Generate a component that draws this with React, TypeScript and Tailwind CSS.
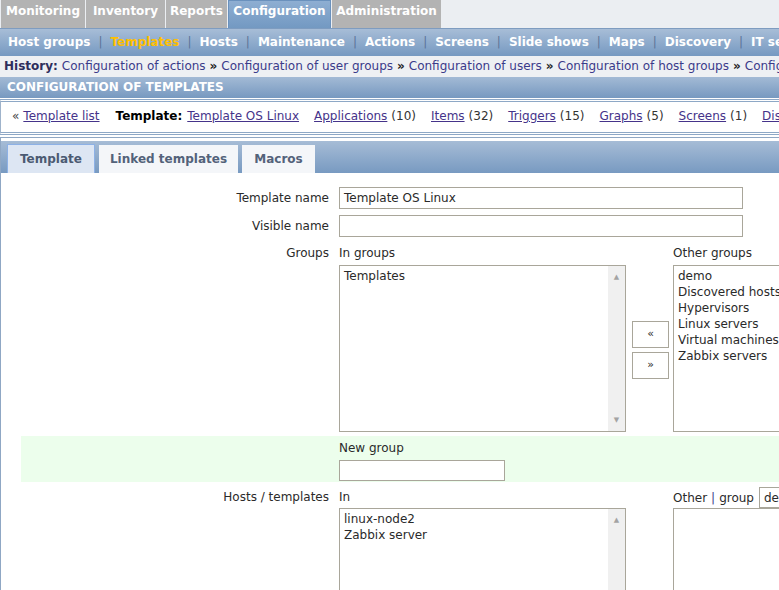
import React from "react";

const topTabs = [
  { label: "Monitoring", w: "w-[84px]" },
  { label: "Inventory", w: "w-[79px]" },
  { label: "Reports", w: "w-[61px]" },
  { label: "Configuration", w: "w-[103px]", active: true },
  { label: "Administration", w: "w-[109px]" },
];

const subNav = [
  "Host groups",
  "Templates",
  "Hosts",
  "Maintenance",
  "Actions",
  "Screens",
  "Slide shows",
  "Maps",
  "Discovery",
  "IT services",
];

const history = [
  "Configuration of actions",
  "Configuration of user groups",
  "Configuration of users",
  "Configuration of host groups",
  "Configuration of templates",
];

const related = [
  { label: "Applications", count: "(10)" },
  { label: "Items", count: "(32)" },
  { label: "Triggers", count: "(15)" },
  { label: "Graphs", count: "(5)" },
  { label: "Screens", count: "(1)" },
  { label: "Discovery rules", count: "(2)" },
];

const otherGroups = [
  "demo",
  "Discovered hosts",
  "Hypervisors",
  "Linux servers",
  "Virtual machines",
  "Zabbix servers",
];

// listbox with the old-style grey scrollbar strip
function ListBox({ items, height, scroll }: { items: string[]; height: string; scroll?: boolean }) {
  return (
    <div className={"flex w-[287px] border border-[#a9a69a] bg-white " + height}>
      <div className="flex-1 px-[4px] pt-[2px] leading-[16px]">
        {items.map((it) => (
          <div key={it}>{it}</div>
        ))}
      </div>
      {scroll && (
        <div className="flex w-[17px] flex-col items-center justify-between bg-[#f0f0f0] py-[6px] text-[7px] text-[#a3a3a3]">
          <span>▲</span>
          <span>▼</span>
        </div>
      )}
    </div>
  );
}

function Label({ children, className = "" }: { children: React.ReactNode; className?: string }) {
  return <div className={"w-[318px] shrink-0 pr-[10px] text-right " + className}>{children}</div>;
}

export default function App() {
  return (
    <div className="h-[590px] w-[779px] overflow-hidden bg-white font-['DejaVu_Sans',sans-serif] text-[12px] text-[#2a2a2a]">
      <div className="w-[1000px]">
        {/* main menu */}
        <div className="flex h-[28px] gap-[1px] bg-[#ebeef2] pl-[1px]">
          {topTabs.map((t) =>
            t.active ? (
              <div
                key={t.label}
                className={
                  "flex justify-center border border-b-0 border-[#6a91bd] bg-gradient-to-b from-[#8eaed2] to-[#7399c2] pt-[1px] font-bold text-white " +
                  t.w
                }
              >
                {t.label}
              </div>
            ) : (
              <div
                key={t.label}
                className={"flex justify-center bg-[#b3b3b3] pt-[2px] font-bold text-white " + t.w}
              >
                {t.label}
              </div>
            )
          )}
        </div>

        {/* sub menu */}
        <div className="flex h-[28px] items-center border-t border-[#7e9cc0] bg-gradient-to-b from-[#a7bdd7] to-[#7699c1] pb-[1px] pl-[8px] font-bold text-white">
          {subNav.map((s, i) => (
            <React.Fragment key={s}>
              {i > 0 && <span className="mx-[8px] font-normal text-[#5b7398]">|</span>}
              <span className={s === "Templates" ? "text-[#ffbf00]" : ""}>{s}</span>
            </React.Fragment>
          ))}
        </div>

        {/* history */}
        <div className="flex h-[21px] items-center whitespace-nowrap bg-[#eef0f3] pb-[2px] pl-[4px] text-[#3b3b8a]">
          <span className="mr-[4px] font-bold text-[#2e2e5c]">History:</span>
          {history.map((h, i) => (
            <React.Fragment key={h}>
              {i > 0 && <span className="mx-[4px] font-bold text-[#222]">»</span>}
              <span>{h}</span>
            </React.Fragment>
          ))}
        </div>

        {/* page title */}
        <div className="flex h-[21px] items-center bg-gradient-to-b from-[#a3bad5] to-[#7799c0] pb-[1px] pl-[7px] font-bold text-white">
          CONFIGURATION OF TEMPLATES
        </div>

        {/* template navigation */}
        <div className="mt-[1px] border-y-[3px] border-double border-x border-x-[#9fb3cb] border-y-[#8ea8c6] bg-white">
          <div className="flex h-[30px] items-center whitespace-nowrap pb-[2px] pl-[11px]">
            <span className="text-[#444]">«</span>
            <span className="ml-[4px] text-[#45338a] underline">Template list</span>
            <span className="ml-[16px] font-bold text-black">Template:</span>
            <span className="ml-[5px] text-[#45338a] underline">Template OS Linux</span>
            {related.map((r) => (
              <span key={r.label} className="ml-[15px]">
                <span className="text-[#45338a] underline">{r.label}</span>
                <span className="ml-[4px] text-[#333]">{r.count}</span>
              </span>
            ))}
          </div>
        </div>

        {/* tabbed form */}
        <div className="mt-[2px] border-l border-t border-[#8fa7c4] pt-[3px]">
          <div className="flex h-[32px] items-end gap-[4px] bg-gradient-to-b from-[#a6bcd6] to-[#789ac1] pl-[6px]">
            <div className="flex h-[29px] w-[88px] items-center justify-center border border-b-0 border-[#8db1e6] bg-[#dde6f3] font-bold text-[#4b5a72]">
              Template
            </div>
            <div className="flex h-[28px] w-[139px] items-center justify-center bg-[#f4f6f9] font-bold text-[#53627a]">
              Linked templates
            </div>
            <div className="flex h-[28px] w-[73px] items-center justify-center bg-[#f4f6f9] font-bold text-[#53627a]">
              Macros
            </div>
          </div>

          <div className="pl-[20px] pt-[14px]">
            <div className="flex items-center">
              <Label>Template name</Label>
              <div className="flex h-[22px] w-[404px] items-center border border-[#a9a69a] px-[4px]">
                Template OS Linux
              </div>
            </div>

            <div className="mt-[6px] flex items-center">
              <Label>Visible name</Label>
              <div className="h-[22px] w-[404px] border border-[#a9a69a]" />
            </div>

            <div className="mt-[7px] flex">
              <Label>Groups</Label>
              <div>
                <div className="h-[21px]">In groups</div>
                <ListBox items={["Templates"]} height="h-[167px]" scroll />
              </div>
              <div className="flex flex-col gap-[4px] pl-[6px] pr-[4px] pt-[77px]">
                <div className="flex h-[27px] w-[37px] items-center justify-center border border-[#a9a69a] bg-white text-[11px]">
                  «
                </div>
                <div className="flex h-[27px] w-[37px] items-center justify-center border border-[#a9a69a] bg-white text-[11px]">
                  »
                </div>
              </div>
              <div>
                <div className="h-[21px]">Other groups</div>
                <div className="h-[167px] w-[220px] border border-[#a9a69a] px-[4px] pt-[2px] leading-[16px]">
                  {otherGroups.map((g) => (
                    <div key={g}>{g}</div>
                  ))}
                </div>
              </div>
            </div>

            <div className="mt-[4px] flex h-[46px] bg-[#ecfeec]">
              <div className="w-[318px] shrink-0" />
              <div className="pt-[3px]">
                <div className="h-[21px]">New group</div>
                <div className="h-[21px] w-[166px] border border-[#a9a69a] bg-white" />
              </div>
            </div>

            <div className="mt-[5px] flex">
              <Label className="pt-[1px]">Hosts / templates</Label>
              <div>
                <div className="h-[21px] pt-[1px]">In</div>
                <ListBox items={["linux-node2", "Zabbix server"]} height="h-[167px]" scroll />
              </div>
              <div className="w-[47px]" />
              <div>
                <div className="flex h-[21px] items-center">
                  <span>Other</span>
                  <span className="mx-[4px] text-[#3b3b8a]">|</span>
                  <span>group</span>
                  <div className="ml-[5px] flex h-[21px] w-[80px] items-center border border-[#a9a69a] px-[4px]">
                    demo
                  </div>
                </div>
                <div className="h-[167px] w-[220px] border border-[#a9a69a]" />
              </div>
            </div>
          </div>
        </div>
      </div>
    </div>
  );
}
